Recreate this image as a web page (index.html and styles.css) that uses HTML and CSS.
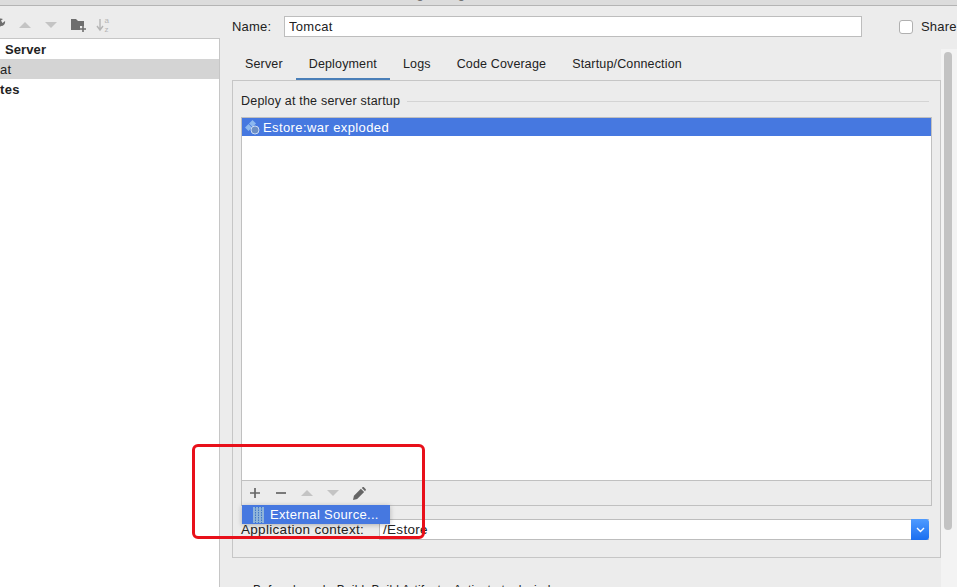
FILE: index.html
```html
<!DOCTYPE html>
<html lang="en">
<head>
<meta charset="UTF-8">
<meta name="viewport" content="width=device-width, initial-scale=1.0">
<title>Run/Debug Configurations</title>
<link rel="stylesheet" href="styles.css">
</head>
<body>
<div class="title-bar"><span class="title-text">Run/Debug Configurations</span></div>
<div class="dialog">
    <!-- left side: configuration tree -->
    <div class="left-side">
        <div class="tree-toolbar">
            <svg class="wrench" width="10" height="14" viewBox="0 0 10 14"><path d="M0 11 L4 8 A4 4 0 0 0 8 3 L5.5 5 L4 2.5 L6 1 A4 4 0 0 0 0 5" fill="#6e6e6e"/></svg>
            <svg width="14" height="10" viewBox="0 0 14 10"><path d="M0 8 L6 2 L12 8Z" fill="#c4c4c4"/></svg>
            <svg width="14" height="10" viewBox="0 0 14 10"><path d="M0 2 L12 2 L6 8Z" fill="#c4c4c4"/></svg>
            <svg class="folder-icon" width="15" height="14" viewBox="0 0 15 14"><path d="M0 1 H5 L7 3 H13 V8 H9 V12 H0Z" fill="#6e6e6e"/><path d="M12 8 V14 M9 11 H15" stroke="#6e6e6e" stroke-width="1.6"/></svg>
            <svg class="sort-icon" width="14" height="16" viewBox="0 0 14 16"><path d="M4 2 V12 M1 9 L4 13 L7 9" stroke="#b5b5b5" stroke-width="1.4" fill="none"/><text x="8.5" y="6" class="sort-text">a</text><text x="8.5" y="15" class="sort-text">z</text></svg>
        </div>
        <div class="tree">
            <div class="tree-row bold server-row">Server</div>
            <div class="tree-row selected tomcat-row">at</div>
            <div class="tree-row bold templates-row">tes</div>
        </div>
    </div>

    <!-- right side: the configuration form -->
    <div class="right-side">
        <div class="name-row">
            <label class="name-label">Name:</label>
            <input class="name-input" type="text" value="Tomcat">
            <span class="checkbox"></span>
            <span class="share-label">Share</span>
        </div>
        <div class="tabs">
            <div class="tab">Server</div>
            <div class="tab active">Deployment</div>
            <div class="tab">Logs</div>
            <div class="tab">Code Coverage</div>
            <div class="tab">Startup/Connection</div>
        </div>
        <div class="content-row">
            <div class="tab-panel">
                <div class="group-title"><span>Deploy at the server startup</span><div class="group-line"></div></div>
                <div class="deploy-box">
                    <div class="deploy-list">
                        <div class="deploy-item">
                            <svg width="18" height="16" viewBox="0 0 18 16"><path d="M5 4.500 L8.500 1 L12 4.500 L8.500 8Z M1 8.500 L4.500 5 L8 8.500 L4.500 12Z" fill="#8db8ee"/><circle cx="11" cy="11" r="4" fill="#6d8fc4" stroke="#c9daf3"/></svg>
                            <span>Estore:war exploded</span>
                        </div>
                    </div>
                    <div class="deploy-toolbar">
                        <svg width="12" height="12" viewBox="0 0 12 12"><path d="M6 1 V11 M1 6 H11" stroke="#666" stroke-width="1.7"/></svg>
                        <svg width="12" height="12" viewBox="0 0 12 12"><path d="M1 6 H11" stroke="#666" stroke-width="1.7"/></svg>
                        <svg width="12" height="12" viewBox="0 0 12 12"><path d="M0 9 L6 3 L12 9Z" fill="#c4c4c4"/></svg>
                        <svg width="12" height="12" viewBox="0 0 12 12"><path d="M0 3 L12 3 L6 9Z" fill="#c4c4c4"/></svg>
                        <svg width="13" height="13" viewBox="0 0 14 14"><path d="M0 14 L1 9.5 L8.5 2 L12 5.5 L4.5 13Z M9.5 1 L10.5 0 Q11 -.3 11.5 0 L13.8 2.300 Q14 3 13.800 3.300 L13 4.500Z" fill="#666"/></svg>
                    </div>
                </div>
                <div class="context-row">
                    <span class="context-label">Application context:</span>
                    <div class="context-input">
                        <span>/Estore</span>
                        <span class="combo-button"><svg width="9" height="6" viewBox="0 0 9 6"><path d="M1 1 L4.500 4.500 L8 1" stroke="#fff" stroke-width="1.400" fill="none"/></svg></span>
                    </div>
                </div>
            </div>
            <div class="scrollbar"><div class="scroll-thumb"></div></div>
        </div>
        <div class="before-launch">Before launch: Build, Build Artifacts, Activate tool window</div>
    </div>
</div>

<!-- popup and the red annotation lie over the form -->
<div class="popup-menu">
    <svg width="11" height="16" viewBox="0 0 11 16"><rect width="11" height="16" fill="#8fb4d9"/><path d="M2.500 0 V16 M5.500 0 V16 M8.500 0 V16" stroke="#3f77c8" stroke-dasharray="1.500 1"/></svg>
    <span>External Source...</span>
</div>
<div class="red-box"></div>
</body>
</html>
```

FILE: styles.css
```css
* {
    box-sizing: border-box;
}
html, body {
    height: 100%;
}
body {
    margin: 0;
    overflow: hidden;
    font-family: "Liberation Sans", Arial, sans-serif;
    font-size: 13px;
    color: #222;
    background-color: #ececec;
}
.title-bar {
    height: 6px;
    background-color: #dcdcdc;
    border-bottom: 1px solid #b4b4b4;
    overflow: hidden;
}
.title-text {
    display: block;
    margin-top: -14px;
    padding-left: 358px;
    font-size: 13px;
    line-height: 15px;
    color: #666;
}
.dialog {
    display: flex;
    height: 581px;
}
.left-side {
    width: 220px;
    display: flex;
    flex-direction: column;
}
.tree-toolbar {
    height: 32px;
    display: flex;
    align-items: center;
    gap: 12px;
    padding-top: 6px;
}
.tree-toolbar .wrench {
    margin-left: -3px;
}
.tree-toolbar .sort-icon {
    margin-left: -2px;
}
.sort-text {
    font-size: 8px;
    fill: #b5b5b5;
}
.tree {
    flex: 1;
    background-color: #fff;
    border-top: 1px solid #c6c6c6;
    border-right: 1px solid #c6c6c6;
}
.tree-row {
    height: 20px;
    line-height: 21px;
    letter-spacing: 0.3px;
    white-space: nowrap;
}
.bold {
    font-weight: bold;
}
.server-row {
    padding-left: 5px;
    letter-spacing: 0.1px;
}
.selected {
    background-color: #d4d4d4;
}
.right-side {
    flex: 1;
    min-width: 0;
    padding-left: 12px;
    display: flex;
    flex-direction: column;
}
.name-row {
    height: 32px;
    display: flex;
    align-items: center;
    padding-top: 10px;
}
.name-label {
    width: 52px;
    letter-spacing: 0.2px;
}
.name-input {
    width: 578px;
    height: 21px;
    padding: 0 4px;
    border: 1px solid #bdbdbd;
    background-color: #fff;
    font-family: inherit;
    font-size: 13px;
    letter-spacing: 0.3px;
    color: #222;
    outline: none;
}
.checkbox {
    width: 14px;
    height: 14px;
    margin-left: 37px;
    margin-right: 8px;
    border: 1px solid #b0b0b0;
    border-radius: 3px;
    background-color: #fff;
}
.share-label {
    letter-spacing: 0.2px;
}
.tabs {
    display: flex;
    height: 38px;
    padding-top: 11px;
    margin-top: 6px;
}
.tab {
    padding: 0 13px;
    height: 27px;
    line-height: 20px;
    font-size: 12.500px;
    letter-spacing: 0.15px;
}
.tab.active {
    border-bottom: 3px solid #4a7fb8;
}
.content-row {
    display: flex;
    align-items: flex-start;
    height: 477px;
}
.tab-panel {
    width: 709px;
    height: 478px;
    margin-top: -1px;
    border: 1px solid #c6c6c6;
    padding: 0 8px;
    flex-shrink: 0;
}
.group-title {
    display: flex;
    align-items: center;
    gap: 7px;
    height: 20px;
    margin-top: 10px;
    font-size: 12.500px;
    letter-spacing: 0.2px;
}
.group-line {
    flex: 1;
    height: 1px;
    margin-right: 3px;
    background-color: #d4d4d4;
}
.deploy-box {
    height: 389px;
    margin-top: 6px;
    border: 1px solid #c0c0c0;
    display: flex;
    flex-direction: column;
}
.deploy-list {
    flex: 1;
    background-color: #fff;
}
.deploy-item {
    height: 18px;
    display: flex;
    align-items: center;
    gap: 1px;
    padding-left: 2px;
    background-color: #4678e0;
    color: #fff;
    font-size: 13px;
    letter-spacing: 0.4px;
}
.deploy-toolbar {
    height: 25px;
    border-top: 1px solid #c0c0c0;
    display: flex;
    align-items: center;
    gap: 14px;
    padding-left: 7px;
}
.context-row {
    display: flex;
    align-items: center;
    margin-top: 13px;
    height: 21px;
    font-size: 13.500px;
    letter-spacing: 0.3px;
}
.context-label {
    width: 138px;
}
.context-input {
    flex: 1;
    height: 21px;
    margin-right: 3px;
    padding-left: 3px;
    line-height: 20px;
    background-color: #fff;
    border: 1px solid #bdbdbd;
    border-right: none;
    display: flex;
    justify-content: space-between;
}
.combo-button {
    width: 18px;
    height: 21px;
    margin-top: -1px;
    border-radius: 0 3px 3px 0;
    background: linear-gradient(#4f9bff, #1a6ef0);
    display: flex;
    align-items: center;
    justify-content: center;
}
.scrollbar {
    width: 16px;
    height: 538px;
    margin-top: -32px;
    background-color: #f3f3f3;
    padding: 3px 0 0 3px;
}
.scroll-thumb {
    width: 8px;
    height: 478px;
    border-radius: 4px;
    background-color: #c3c3c3;
}
.before-launch {
    margin-top: 25px;
    padding-left: 21px;
    font-size: 12px;
    letter-spacing: 0.2px;
    white-space: nowrap;
}
.popup-menu {
    position: absolute;
    left: 242px;
    top: 505px;
    width: 148px;
    height: 19px;
    display: flex;
    align-items: center;
    gap: 6px;
    padding-left: 11px;
    background-color: #4678e0;
    color: #fff;
    font-size: 13px;
    letter-spacing: 0.3px;
    box-shadow: 0 1px 5px rgba(0, 0, 0, 0.25);
}
.red-box {
    position: absolute;
    left: 192px;
    top: 444px;
    width: 233px;
    height: 95px;
    border: 3px solid #e8101a;
    border-radius: 6px;
}
```
